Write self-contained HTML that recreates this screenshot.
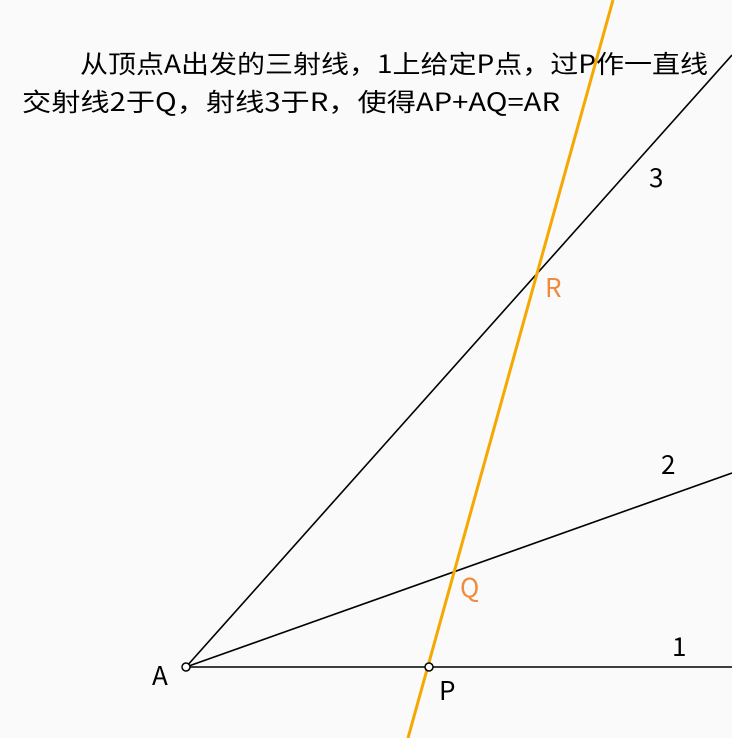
<!DOCTYPE html>
<html><head><meta charset="utf-8"><style>
html,body{margin:0;padding:0;background:#fafafa;}
svg{display:block}
text{font-family:"Noto Sans CJK SC","Liberation Sans",sans-serif;}
</style></head><body>
<svg width="732" height="738" viewBox="0 0 732 738" xmlns="http://www.w3.org/2000/svg">
<rect width="732" height="738" fill="#fafafa"/>
<text x="80" y="73" font-size="25" fill="#000" textLength="628" lengthAdjust="spacingAndGlyphs">从顶点A出发的三射线，1上给定P点，过P作一直线</text>
<text x="22" y="111" font-size="25" fill="#000" textLength="538" lengthAdjust="spacingAndGlyphs">交射线2于Q，射线3于R，使得AP+AQ=AR</text>
<g stroke="#000" stroke-width="1.6" fill="none">
<line x1="186" y1="667" x2="732" y2="667"/>
<line x1="186" y1="667" x2="732" y2="473"/>
<line x1="186" y1="667" x2="732" y2="55"/>
</g>
<line x1="613" y1="0" x2="408" y2="738" stroke="#f5a800" stroke-width="3"/>
<circle cx="186" cy="667" r="4" fill="#fff" stroke="#000" stroke-width="1.5"/>
<circle cx="429" cy="667" r="4" fill="#fff" stroke="#000" stroke-width="1.5"/>
<g font-size="26" fill="#000">
<text x="152" y="685">A</text>
<text x="439" y="700">P</text>
<text x="672" y="656">1</text>
<text x="661" y="474">2</text>
<text x="649" y="187">3</text>
</g>
<g font-size="26" fill="#f08a3c">
<text x="460" y="597">Q</text>
<text x="545" y="297">R</text>
</g>
</svg>
</body></html>
